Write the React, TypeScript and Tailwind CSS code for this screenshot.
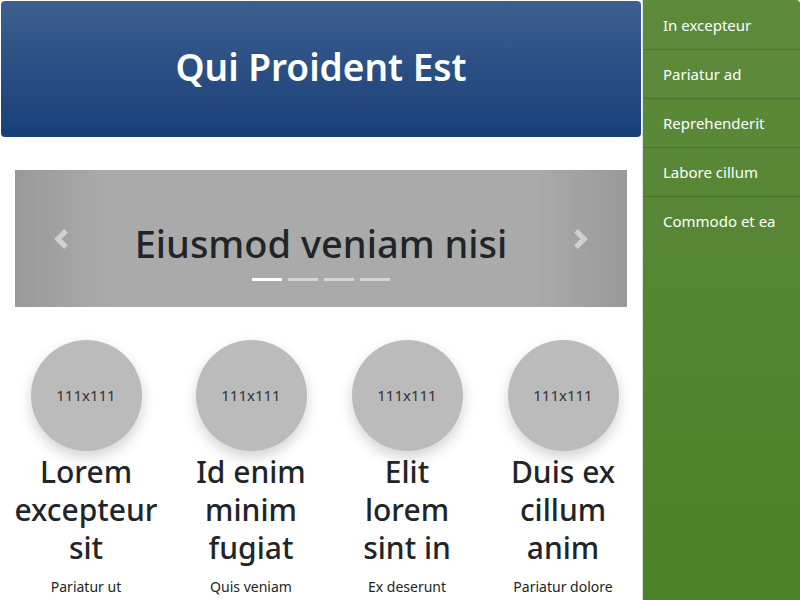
import React from 'react';

const navItems = ['In excepteur', 'Pariatur ad', 'Reprehenderit', 'Labore cillum', 'Commodo et ea'];

const features = [
  { title: 'Lorem excepteur sit', text: 'Pariatur ut', width: 'w-[142px]', gap: 'ml-0' },
  { title: 'Id enim minim fugiat', text: 'Quis veniam', width: 'w-[142px]', gap: 'ml-[23px]' },
  { title: 'Elit lorem sint in', text: 'Ex deserunt', width: 'w-[122px]', gap: 'ml-[24px]' },
  { title: 'Duis ex cillum anim', text: 'Pariatur dolore', width: 'w-[128px]', gap: 'ml-[31px]' },
];

const Chevron = ({ dir }: { dir: 'left' | 'right' }) => (
  <svg width="20" height="20" viewBox="0 0 8 8" fill="#ffffff" fillOpacity="0.5">
    {dir === 'left' ? (
      <path d="M5.25 0l-4 4 4 4 1.5-1.5-2.5-2.5 2.5-2.5-1.5-1.5z" />
    ) : (
      <path d="M2.75 0l-1.5 1.5 2.5 2.5-2.5 2.5 1.5 1.5 4-4-4-4z" />
    )}
  </svg>
);

export default function App() {
  return (
    <div className="flex w-[800px] h-[600px] overflow-hidden bg-white text-[#212529] font-['Noto_Sans','Open_Sans',sans-serif]">
      <div className="w-[642px] shrink-0 flex flex-col">
        <header className="m-px h-[136px] rounded-[4px] bg-gradient-to-b from-[#3d5f8f] to-[#173f78] flex items-center justify-center">
          <h1 className="text-[37px] font-semibold text-white leading-none mb-[5px]">Qui Proident Est</h1>
        </header>

        <div className="px-[15px] pt-[32px]">
          <div className="relative h-[137px] bg-[#aaaaaa] flex items-center justify-center">
            <div className="absolute left-0 top-0 bottom-0 w-[92px] bg-gradient-to-r from-[#999999] to-[#aaaaaa] flex items-center justify-center">
              <Chevron dir="left" />
            </div>
            <div className="absolute right-0 top-0 bottom-0 w-[92px] bg-gradient-to-l from-[#999999] to-[#aaaaaa] flex items-center justify-center">
              <Chevron dir="right" />
            </div>
            <h2 className="relative text-[38px] font-medium leading-none mt-[9px]">Eiusmod veniam nisi</h2>
            <div className="absolute bottom-[26px] left-0 right-0 flex justify-center gap-[6px]">
              <span className="w-[30px] h-[3px] bg-white" />
              <span className="w-[30px] h-[3px] bg-white/50" />
              <span className="w-[30px] h-[3px] bg-white/50" />
              <span className="w-[30px] h-[3px] bg-white/50" />
            </div>
          </div>

          <div className="flex mt-[33px]">
            {features.map((f) => (
              <div key={f.title} className={`${f.width} ${f.gap} shrink-0 flex flex-col items-center text-center`}>
                <div className="w-[111px] h-[111px] rounded-full bg-[#bbbbbb] shadow-[0_6px_14px_rgba(0,0,0,0.18)] flex items-center justify-center text-[15px] text-[#333]">
                  111x111
                </div>
                <h3 className="mt-[2px] text-[30px] font-medium leading-[38px]">{f.title}</h3>
                <p className="mt-[10px] text-[14px] leading-[20px]">{f.text}</p>
              </div>
            ))}
          </div>
        </div>
      </div>

      <nav className="flex-1 pt-px border-l border-[#dcdfe8] rounded-tr-[4px] bg-gradient-to-b from-[#5d8a3b] to-[#4b8127]">
        {navItems.map((item, i) => (
          <div
            key={item}
            className={`h-[49px] px-[20px] flex items-center text-[15px] text-white ${i < navItems.length - 1 ? 'border-b border-black/15' : ''}`}
          >
            {item}
          </div>
        ))}
      </nav>
    </div>
  );
}
